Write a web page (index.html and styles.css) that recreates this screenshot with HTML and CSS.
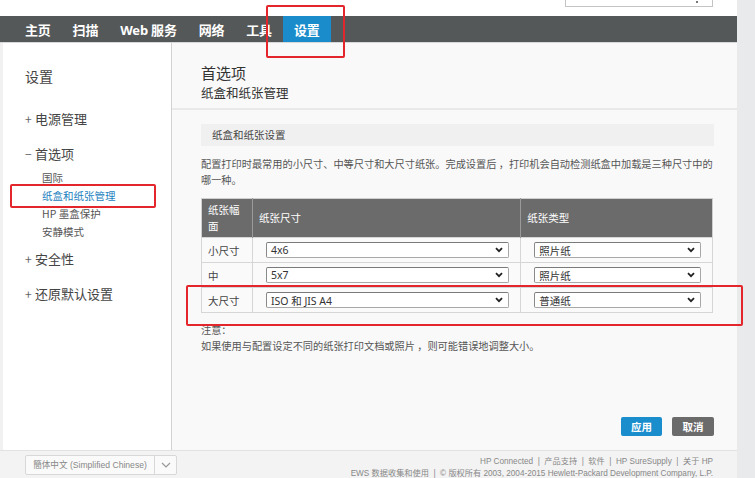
FILE: index.html
```html
<!DOCTYPE html>
<html lang="zh-CN">
<head>
<meta charset="utf-8">
<title>设置 - 纸盒和纸张管理</title>
<link rel="stylesheet" href="styles.css">
</head>
<body>
<div class="app">
  <div class="page">
    <div class="topbar">
      <div class="search"><span class="search-caret"></span></div>
    </div>
    <nav class="nav">
      <span class="nav-item">主页</span>
      <span class="nav-item">扫描</span>
      <span class="nav-item">Web 服务</span>
      <span class="nav-item">网络</span>
      <span class="nav-item">工具</span>
      <span class="nav-item active">设置</span>
    </nav>
    <div class="content">
      <aside class="side">
        <div class="side-title">设置</div>
        <div class="side-group g1"><span class="sign">+</span>电源管理</div>
        <div class="side-group g2"><span class="sign">−</span>首选项</div>
        <ul class="side-sub">
          <li>国际</li>
          <li class="current">纸盒和纸张管理</li>
          <li>HP 墨盒保护</li>
          <li>安静模式</li>
        </ul>
        <div class="side-group g3"><span class="sign">+</span>安全性</div>
        <div class="side-group g4"><span class="sign">+</span>还原默认设置</div>
      </aside>
      <main class="main">
        <header class="main-head">
          <h1 class="h1">首选项</h1>
          <h2 class="h2">纸盒和纸张管理</h2>
        </header>
        <section class="main-body">
          <div class="section-title">纸盒和纸张设置</div>
          <p class="desc">配置打印时最常用的小尺寸、中等尺寸和大尺寸纸张。完成设置后 ，打印机会自动检测纸盒中加载是三种尺寸中的<br>哪一种。</p>
          <table class="tbl">
            <thead>
              <tr>
                <th class="c1">纸张幅<br>面</th>
                <th class="c2">纸张尺寸</th>
                <th class="c3">纸张类型</th>
              </tr>
            </thead>
            <tbody>
              <tr>
                <td>小尺寸</td>
                <td class="sel-cell"><div class="select"><span>4x6</span><svg class="chev" viewBox="0 0 8 6" width="8" height="6"><path d="M1 1.2 L4 4.2 L7 1.2" fill="none" stroke="#222" stroke-width="1.8"/></svg></div></td>
                <td class="sel-cell"><div class="select"><span>照片纸</span><svg class="chev" viewBox="0 0 8 6" width="8" height="6"><path d="M1 1.2 L4 4.2 L7 1.2" fill="none" stroke="#222" stroke-width="1.8"/></svg></div></td>
              </tr>
              <tr>
                <td>中</td>
                <td class="sel-cell"><div class="select"><span>5x7</span><svg class="chev" viewBox="0 0 8 6" width="8" height="6"><path d="M1 1.2 L4 4.2 L7 1.2" fill="none" stroke="#222" stroke-width="1.8"/></svg></div></td>
                <td class="sel-cell"><div class="select"><span>照片纸</span><svg class="chev" viewBox="0 0 8 6" width="8" height="6"><path d="M1 1.2 L4 4.2 L7 1.2" fill="none" stroke="#222" stroke-width="1.8"/></svg></div></td>
              </tr>
              <tr>
                <td>大尺寸</td>
                <td class="sel-cell"><div class="select"><span>ISO 和 JIS A4</span><svg class="chev" viewBox="0 0 8 6" width="8" height="6"><path d="M1 1.2 L4 4.2 L7 1.2" fill="none" stroke="#222" stroke-width="1.8"/></svg></div></td>
                <td class="sel-cell"><div class="select"><span>普通纸</span><svg class="chev" viewBox="0 0 8 6" width="8" height="6"><path d="M1 1.2 L4 4.2 L7 1.2" fill="none" stroke="#222" stroke-width="1.8"/></svg></div></td>
              </tr>
            </tbody>
          </table>
          <p class="note">注意：<br>如果使用与配置设定不同的纸张打印文档或照片 ，则可能错误地调整大小。</p>
          <div class="actions">
            <button class="btn btn-apply">应用</button>
            <button class="btn btn-cancel">取消</button>
          </div>
        </section>
      </main>
    </div>
    <footer class="footer">
      <div class="lang">
        <span class="lang-text">簡体中文 (Simplified Chinese)</span>
        <span class="lang-arrow"><svg viewBox="0 0 10 6" width="10" height="6"><path d="M1 1 L5 5 L9 1" fill="none" stroke="#999" stroke-width="1.2"/></svg></span>
      </div>
      <div class="foot-links">
        <div>HP Connected &nbsp;|&nbsp; 产品支持 &nbsp;|&nbsp; 软件 &nbsp;|&nbsp; HP SureSupply &nbsp;|&nbsp; 关于 HP</div>
        <div>EWS 数据收集和使用 &nbsp;|&nbsp; © 版权所有 2003, 2004-2015 Hewlett-Packard Development Company, L.P.</div>
      </div>
    </footer>
  </div>
  <div class="strip"></div>
</div>
<div class="mark mark-nav"></div>
<div class="mark mark-side"></div>
<div class="mark mark-row"></div>
</body>
</html>
```

FILE: styles.css
```css
* { box-sizing: border-box; }
html, body { margin: 0; padding: 0; }
body {
  width: 755px;
  height: 478px;
  overflow: hidden;
  font-family: "Noto Sans", "Noto Sans CJK SC", sans-serif;
  color: #444;
  background: #fff;
  position: relative;
}
.app { display: flex; height: 478px; }
.page { width: 737px; display: flex; flex-direction: column; }
.strip { width: 18px; background: #e8eaeb; }

.topbar { height: 16px; display: flex; justify-content: flex-end; padding-right: 24px; background: #fff; }
.search {
  width: 148px; height: 24px; margin-top: -17px;
  border: 1px solid #c4c4c4; background: #fff; position: relative;
}
.search-caret { position: absolute; right: 14px; bottom: 3px; width: 2px; height: 2px; background: #777; }

.nav {
  height: 27px; background: #555859; display: flex; align-items: stretch;
  padding-left: 14px; border-bottom: 1px solid #d8d8d8;
}
.nav-item {
  display: flex; align-items: center; padding: 0 11px;
  color: #fff; font-weight: 700; font-size: 13px; letter-spacing: -0.2px;
  font-family: "Noto Sans", "Noto Sans CJK SC", sans-serif;
}
.nav-item.active { background: #1b8ccb; }

.content { height: 407px; display: flex; }
.side {
  width: 172px; background: #fff; border-right: 1px solid #d2d2d2;
  border-left: 3px solid #f1f1f1;
  padding: 23px 0 0 22px;
  font-family: "Noto Sans CJK SC", sans-serif;
}
.side-title { font-size: 14px; line-height: 20px; color: #444; }
.side-group { font-size: 13px; line-height: 20px; color: #444; }
.g1 { margin-top: 23px; }
.g2 { margin-top: 15px; }
.g3 { margin-top: 8px; }
.g4 { margin-top: 15px; }
.sign { display: inline-block; width: 10px; color: #666; font-size: 12px; }
.side-sub { list-style: none; margin: 5px 0 0 17px; padding: 0; }
.side-sub li { font-size: 10.5px; line-height: 18px; color: #555; }
.side-sub li.current { color: #1b7fc0; }

.main { flex: 1; background: #f9f9f9; display: flex; flex-direction: column; }
.main-head { padding: 20px 29px 6px; border-bottom: 2px solid #e9e9e9; }
.h1 { margin: 0; font-size: 15px; line-height: 20px; font-weight: 400; color: #333; font-family: "Noto Sans CJK SC", sans-serif; }
.h2 { margin: 1px 0 0; font-size: 12.5px; line-height: 18px; font-weight: 400; color: #333; font-family: "Noto Sans CJK SC", sans-serif; }

.main-body { flex: 1; padding: 14px 23px 14px 29px; display: flex; flex-direction: column; }
.section-title {
  height: 22px; line-height: 22px; background: #f0f0f0; padding-left: 11px;
  font-size: 10.5px; color: #444; font-family: "Noto Sans CJK SC", sans-serif;
}
.desc { margin: 10px 0 0; font-size: 10.2px; line-height: 16px; color: #555; font-family: "Noto Sans CJK SC", sans-serif; white-space: nowrap; }

.tbl { margin-top: 10px; width: 512px; border-collapse: collapse; border: 1px solid #cfcfcf; font-family: "Noto Sans CJK SC", sans-serif; }
.tbl th {
  background: #6b6b6b; color: #fff; font-weight: 400; font-size: 10.5px;
  text-align: left; height: 39px; line-height: 16px; padding: 0 6px;
  border-left: 1px solid #9a9a9a;
}
.tbl th:first-child { border-left: none; }
.tbl .c1 { width: 51px; }
.tbl .c2 { width: 269px; }
.tbl .c3 { width: 192px; }
.tbl td {
  height: 25px; background: #fafafa; border: 1px solid #d6d6d6;
  font-size: 10.5px; color: #444; padding: 0 6px;
}
.tbl td.sel-cell { padding: 0 11px 0 13px; }
.select {
  height: 16px; background: #fff; border: 1px solid #a8a8a8; border-top-color: #7a7a7a;
  border-left-color: #8a8a8a; border-radius: 2px;
  display: flex; align-items: center; justify-content: space-between; padding: 0 5px 0 4px;
  font-size: 10.5px; color: #333; font-family: "Noto Sans", "Noto Sans CJK SC", sans-serif;
}
.chev { display: block; }

.note { margin: 9px 0 0; font-size: 10.2px; line-height: 16px; color: #555; font-family: "Noto Sans CJK SC", sans-serif; }
.actions { margin-top: auto; display: flex; justify-content: flex-end; gap: 10px; }
.btn {
  height: 19px; width: 42px; border: none; border-radius: 2px; color: #fff;
  font-size: 10.5px; font-weight: 700; font-family: "Noto Sans CJK SC", sans-serif; padding: 0;
}
.btn-apply { background: #1a8dcc; width: 41px; }
.btn-cancel { background: #6b6b6b; }

.footer {
  height: 28px; background: #f3f3f3; border-top: 1px solid #e2e2e2;
  display: flex; padding: 0 24px 0 25px; align-items: flex-start;
}
.lang {
  margin-top: 4px; height: 20px; width: 152px; display: flex;
  border: 1px solid #d8d8d8; background: #fafafa; border-radius: 2px;
}
.lang-text {
  flex: 1; text-align: center; font-size: 8.6px; line-height: 18px; color: #888; white-space: nowrap;
  border-right: 1px solid #d8d8d8; font-family: "Liberation Sans", "Noto Sans CJK SC", sans-serif;
}
.lang-arrow { width: 21px; display: flex; align-items: center; justify-content: center; }
.foot-links {
  margin-left: auto; margin-top: 5px; text-align: right; font-size: 8.2px; line-height: 12px; color: #888;
  font-family: "Liberation Sans", "Noto Sans CJK SC", sans-serif; white-space: nowrap;
}

.mark { position: absolute; border: 2px solid #e3262b; border-radius: 2px; pointer-events: none; }
.mark-nav { left: 266px; top: 5px; width: 79px; height: 53px; }
.mark-side { left: 10px; top: 184px; width: 146px; height: 24px; }
.mark-row { left: 186px; top: 285px; width: 557px; height: 41px; }
```
